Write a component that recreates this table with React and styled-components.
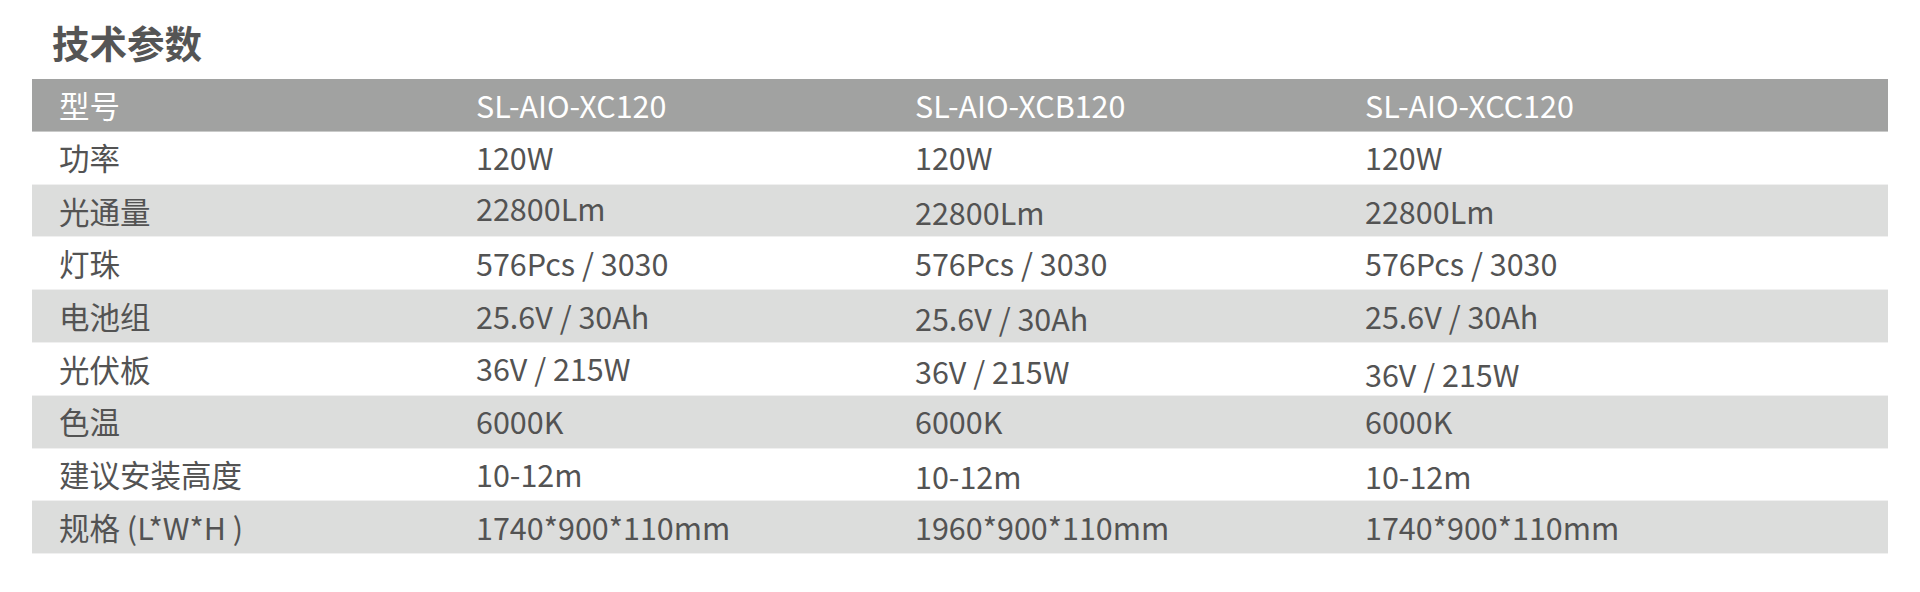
import React from "react";
import styled, { createGlobalStyle } from "styled-components";

const Global = createGlobalStyle`
  html, body { margin: 0; padding: 0; background: #fff; }
  body { font-family: "Noto Sans CJK SC", "Noto Sans", sans-serif; }
`;

const Page = styled.div`
  width: 1920px;
  height: 592px;
  padding: 20px 32px 0 32px;
  box-sizing: border-box;
`;

const Title = styled.h2`
  margin: 0 0 15px 20px;
  font-size: 37.5px;
  line-height: 44px;
  font-weight: 700;
  color: #555;
`;

const Table = styled.div`
  width: 1856px;
  display: flex;
  flex-direction: column;
`;

const Row = styled.div`
  display: grid;
  grid-template-columns: 417px 439px 450px 1fr;
  height: 52.8px;
  box-sizing: border-box;
  align-items: center;
  background: ${(p) => (p.$head ? "#a1a2a1" : p.$stripe ? "#dcdddc" : "#fff")};
  border-bottom: 1px solid ${(p) => (p.$head ? "#c9cac9" : "#f0f0f0")};
  color: ${(p) => (p.$head ? "#fff" : "#535353")};
`;

const Cell = styled.div`
  padding-left: 27px;
  font-size: 30.5px;
  line-height: 1;
  white-space: nowrap;
  transform: translateY(${(p) => p.$dy || 0}px);
`;

const rows = [
  { c: ["功率", "120W", "120W", "120W"], dy: [0, 0, 0, 0] },
  { c: ["光通量", "22800Lm", "22800Lm", "22800Lm"], dy: [1, -2, 2, 1] },
  { c: ["灯珠", "576Pcs / 3030", "576Pcs / 3030", "576Pcs / 3030"], dy: [0, 0, 0, 0] },
  { c: ["电池组", "25.6V / 30Ah", "25.6V / 30Ah", "25.6V / 30Ah"], dy: [0, 0, 2, 0] },
  { c: ["光伏板", "36V / 215W", "36V / 215W", "36V / 215W"], dy: [0, -1, 2, 5] },
  { c: ["色温", "6000K", "6000K", "6000K"], dy: [0, 0, 0, 0] },
  { c: ["建议安装高度", "10-12m", "10-12m", "10-12m"], dy: [0, 0, 2, 2] },
  { c: ["规格 (L*W*H )", "1740*900*110mm", "1960*900*110mm", "1740*900*110mm"], dy: [0, 0, 0, 0] },
];

export default function App() {
  return (
    <Page>
      <Global />
      <Title>技术参数</Title>
      <Table>
        <Row $head>
          <Cell>型号</Cell>
          <Cell>SL-AIO-XC120</Cell>
          <Cell>SL-AIO-XCB120</Cell>
          <Cell>SL-AIO-XCC120</Cell>
        </Row>
        {rows.map((r, i) => (
          <Row key={i} $stripe={i % 2 === 1}>
            {r.c.map((c, j) => (
              <Cell key={j} $dy={r.dy[j]}>
                {c}
              </Cell>
            ))}
          </Row>
        ))}
      </Table>
    </Page>
  );
}
